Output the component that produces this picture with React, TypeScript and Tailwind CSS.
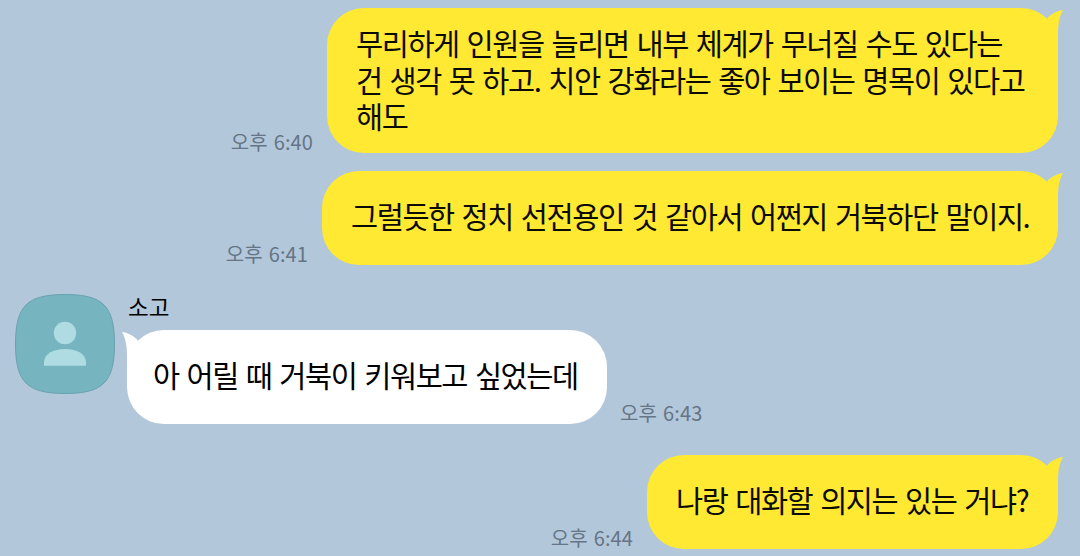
import clsx from 'clsx';

interface MessageProps {
  text: string;
  time: string;
  className: string;
  bubbleClassName: string;
}

function OutgoingTail() {
  return (
    <svg className="absolute -right-[5px] top-0 h-[40px] w-[24px]" viewBox="0 0 24 40">
      <path d="M8.500 9.800 L8 40 L19 40 L19 26 C19 16 20.500 8 24 2 C19 2.500 13 5.300 8.500 9.800 Z" fill="#ffe933" />
    </svg>
  );
}

function IncomingTail() {
  return (
    <svg className="absolute -left-[5px] top-0 h-[40px] w-[24px]" viewBox="0 0 24 40">
      <path d="M15.500 9.800 L16 40 L5 40 L5 26 C5 16 3.500 8 0 2 C5 2.500 11 5.300 15.500 9.800 Z" fill="#ffffff" />
    </svg>
  );
}

function BubbleText({ children }: { children: string }) {
  return (
    <p className="whitespace-pre text-[29.5px] leading-[36.5px] tracking-[-1.45px] [word-spacing:2.7px]">{children}</p>
  );
}

function Time({ children }: { children: string }) {
  return (
    <time className="mb-[1px] text-[20px] leading-[20px] tracking-[0.1px] whitespace-nowrap text-[#657586] [word-spacing:1.5px]">
      {children}
    </time>
  );
}

function OutgoingMessage({ text, time, className, bubbleClassName }: MessageProps) {
  return (
    <div className={clsx('flex items-end justify-end gap-[14px] pr-[22px]', className)}>
      <Time>{time}</Time>
      <div
        className={clsx(
          'relative flex shrink-0 flex-col justify-center rounded-[37px] bg-[#ffe933] pl-[29px] text-[#0c0b03]',
          bubbleClassName,
        )}
      >
        <BubbleText>{text}</BubbleText>
        <OutgoingTail />
      </div>
    </div>
  );
}

function IncomingMessage({ text, time, className, bubbleClassName }: MessageProps) {
  return (
    <div className={clsx('flex items-end gap-[13px]', className)}>
      <div
        className={clsx(
          'relative flex shrink-0 flex-col justify-center rounded-[37px] bg-white pl-[26px] text-black',
          bubbleClassName,
        )}
      >
        <BubbleText>{text}</BubbleText>
        <IncomingTail />
      </div>
      <Time>{time}</Time>
    </div>
  );
}

function Avatar() {
  return (
    <svg className="size-[102px] shrink-0" viewBox="0 0 102 102">
      <path
        d="M51 1.5 C89 1.5 100.500 13 100.500 51 C100.500 89 89 100.500 51 100.500 C13 100.500 1.500 89 1.500 51 C1.500 13 13 1.500 51 1.500 Z"
        fill="#76b4bf"
        stroke="#6aa2b0"
      />
      <circle cx="51" cy="40" r="11.2" fill="#aedce2" />
      <path d="M30 72.700 V69.500 C30 61 39 56 51 56 C63 56 72 61 72 69.500 V72.700 Z" fill="#aedce2" />
    </svg>
  );
}

export default function App() {
  return (
    <main className="h-[556px] w-[1080px] overflow-hidden bg-[#b2c7da] pt-[8px] font-['Noto_Sans_CJK_KR',sans-serif]">
      <OutgoingMessage
        className="h-[145px]"
        bubbleClassName="h-[145px] w-[731px] pb-[3px]"
        time="오후 6:40"
        text={'무리하게 인원을 늘리면 내부 체계가 무너질 수도 있다는\n건 생각 못 하고. 치안 강화라는 좋아 보이는 명목이 있다고\n해도'}
      />
      <OutgoingMessage
        className="mt-[18px] h-[94px]"
        bubbleClassName="h-[94px] w-[736px] pb-[5px]"
        time="오후 6:41"
        text="그럴듯한 정치 선전용인 것 같아서 어쩐지 거북하단 말이지."
      />

      <div className="mt-[28px] flex h-[131px] pl-[14px]">
        <Avatar />
        <div className="ml-[11px]">
          <div className="h-[37px] pl-[1px] text-[22.5px] leading-[27px] text-black">소고</div>
          <IncomingMessage
            className="h-[94px]"
            bubbleClassName="h-[94px] w-[480px] pb-[5px]"
            time="오후 6:43"
            text="아 어릴 때 거북이 키워보고 싶었는데"
          />
        </div>
      </div>

      <OutgoingMessage
        className="mt-[31px] h-[94px]"
        bubbleClassName="h-[94px] w-[411px] pb-[5px]"
        time="오후 6:44"
        text="나랑 대화할 의지는 있는 거냐?"
      />
    </main>
  );
}
